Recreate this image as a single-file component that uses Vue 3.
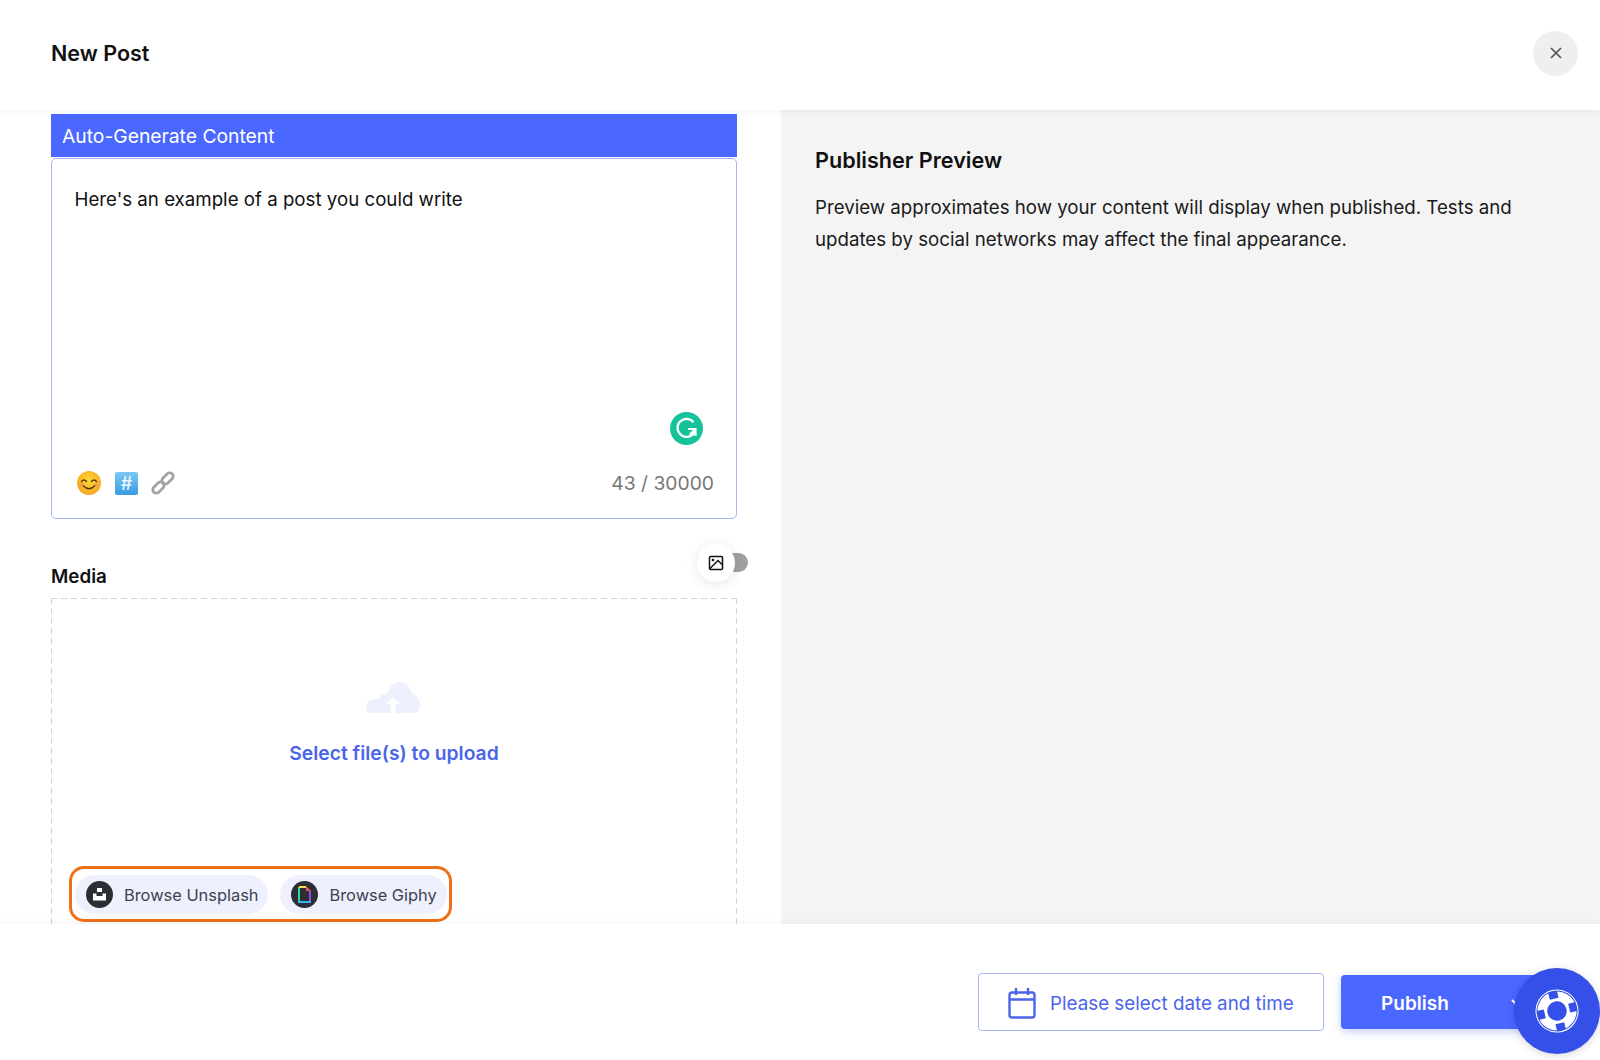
<script setup>
const title = 'New Post'
</script>

<template>
  <div class="page">
    <header class="top">
      <h1>{{ title }}</h1>
      <button class="close" aria-label="Close">
        <svg width="14" height="14" viewBox="0 0 14 14"><path d="M2 2l10 10M12 2L2 12" stroke="#555" stroke-width="1.7" fill="none"/></svg>
      </button>
    </header>

    <main class="main">
      <section class="left">
        <div class="bar">Auto-Generate Content</div>
        <div class="editor">
          <p class="post">Here's an example of a post you could write</p>
          <div class="grammarly">
            <svg width="33" height="33" viewBox="0 0 33 33">
              <circle cx="16.5" cy="16.5" r="16.5" fill="#15c39a"/>
              <path d="M23.500 10.200A9 9 0 1 0 25 19" fill="none" stroke="#fff" stroke-width="2.200"/>
              <path d="M18 17h7.500v7M25 17.500l-5 5" fill="none" stroke="#fff" stroke-width="2.200"/>
            </svg>
          </div>
          <div class="tools">
            <div class="tool-icons">
              <svg width="26" height="24" viewBox="0 0 26 24">
                <defs><radialGradient id="face" cx="50%" cy="40%" r="60%"><stop offset="0" stop-color="#fdd835"/><stop offset="1" stop-color="#f5a623"/></radialGradient></defs>
                <circle cx="13" cy="12" r="12" fill="url(#face)"/>
                <path d="M5.500 10.500q2.500-3 5 0M15.500 10.500q2.500-3 5 0" fill="none" stroke="#5b3a10" stroke-width="1.500" stroke-linecap="round"/>
                <path d="M7 14.500q6 6.500 12 0" fill="none" stroke="#5b3a10" stroke-width="1.500" stroke-linecap="round"/>
                <circle cx="5.500" cy="14" r="2.300" fill="#f78f5c" opacity=".6"/>
                <circle cx="20.500" cy="14" r="2.300" fill="#f78f5c" opacity=".6"/>
              </svg>
              <span class="hash">#</span>
              <svg width="24" height="24" viewBox="0 0 24 24">
                <g fill="none" stroke="#a3a3a3" stroke-width="2.800" transform="rotate(-45 12 12)">
                  <rect x="-1" y="8.500" width="13" height="7" rx="3.500"/>
                  <rect x="12" y="8.500" width="13" height="7" rx="3.500"/>
                </g>
              </svg>
            </div>
            <span class="count">43 / 30000</span>
          </div>
        </div>

        <div class="media-head">
          <h2>Media</h2>
          <div class="toggle">
            <span class="knob"></span>
            <span class="thumb">
              <svg width="16" height="16" viewBox="0 0 16 16">
                <rect x="1.500" y="1.500" width="13" height="13" rx="1" fill="none" stroke="#111" stroke-width="1.500"/>
                <circle cx="5" cy="5" r="1.300" fill="#111"/>
                <path d="M2 13.500l8-8 4 4" fill="none" stroke="#111" stroke-width="1.500"/>
              </svg>
            </span>
          </div>
        </div>

        <div class="drop">
          <svg class="cloud" width="54" height="31" viewBox="0 0 54 31">
            <path fill="#eef0fd" d="M0 26c0-5 4-9 9-9 1 0 2 0 3 .5C14 13 18 11 21 12 23 5 28 0 33 0c7 0 12 5 13 12 5 1 8 6 8 11 0 4-2 8-6 8H6c-4 0-6-2-6-5z"/>
            <path fill="#fff" d="M27 15l-7 7h4.500v9h5v-9H34z"/>
          </svg>
          <div class="select">Select file(s) to upload</div>
          <div class="browse">
            <button class="chip">
              <span class="dot">
                <svg width="15" height="15" viewBox="0 0 15 15"><path fill="#fff" d="M5 1h5v4H5zM1 6.500h3.500V9h6V6.500H14V13.500H1z"/></svg>
              </span>
              Browse Unsplash
            </button>
            <button class="chip chip2">
              <span class="dot">
                <svg width="13" height="17" viewBox="0 0 13 17">
                  <path d="M1 1v15" stroke="#2fd8a0" stroke-width="2" fill="none"/>
                  <path d="M1 1h7" stroke="#f4e14b" stroke-width="2" fill="none"/>
                  <path d="M12 5v11" stroke="#8a4df0" stroke-width="2" fill="none"/>
                  <path d="M0 16h13" stroke="#3ab4f2" stroke-width="2" fill="none"/>
                  <path d="M8 0l5 5H8z" fill="#f5506e"/>
                </svg>
              </span>
              Browse Giphy
            </button>
          </div>
        </div>
      </section>

      <aside class="right">
        <h2>Publisher Preview</h2>
        <p>Preview approximates how your content will display when published. Tests and updates by social networks may affect the final appearance.</p>
      </aside>
    </main>

    <footer class="bottom">
      <button class="date">
        <svg width="28" height="31" viewBox="0 0 28 31" fill="none" stroke="#4a65e8" stroke-width="2.400">
          <rect x="1.500" y="4.500" width="25" height="25" rx="2.500"/>
          <path d="M1.500 11.500h25M8 0v7M20 0v7"/>
        </svg>
        Please select date and time
      </button>
      <button class="publish">
        Publish
        <svg class="chev" width="14" height="9" viewBox="0 0 14 9"><path d="M1 1l6 6 6-6" fill="none" stroke="#fff" stroke-width="2"/></svg>
      </button>
    </footer>

    <button class="help" aria-label="Help">
      <svg width="50" height="50" viewBox="0 0 50 50">
        <g transform="rotate(-13 25 25)">
          <circle cx="25" cy="25" r="14.600" fill="none" stroke="#fff" stroke-width="9.800"/>
          <g fill="#3550e8">
            <rect x="20.500" y="5" width="9" height="7.500"/>
            <rect x="20.500" y="37.500" width="9" height="7.500"/>
            <rect x="5" y="20.500" width="7.500" height="9"/>
            <rect x="37.500" y="20.500" width="7.500" height="9"/>
          </g>
          <circle cx="25" cy="25" r="21" fill="none" stroke="#fff" stroke-width="1"/>
        </g>
      </svg>
    </button>
  </div>
</template>

<style>
html, body { margin: 0; background: #fff; }
</style>

<style scoped>
.page {
  position: relative;
  width: 1600px;
  height: 1060px;
  overflow: hidden;
  display: flex;
  flex-direction: column;
  font-family: Inter, "Liberation Sans", sans-serif;
  color: #111;
  background: #fff;
}
button { font-family: inherit; cursor: pointer; }
h1, h2, p { margin: 0; }

.top {
  height: 110px;
  flex: none;
  display: flex;
  align-items: center;
  justify-content: space-between;
  padding: 0 22px 4px 51px;
  box-sizing: border-box;
  position: relative;
  z-index: 2;
  box-shadow: 0 2px 6px rgba(0, 0, 0, .05);
  background: #fff;
}
.top h1 { font-size: 21.500px; font-weight: 600; line-height: 30px; }
.close {
  width: 45px;
  height: 45px;
  border: 0;
  border-radius: 50%;
  background: #eeeff0;
  display: flex;
  align-items: center;
  justify-content: center;
  padding: 0;
}

.main { flex: 1; min-height: 0; display: flex; overflow: hidden; }
.left {
  width: 781px;
  flex: none;
  box-sizing: border-box;
  padding: 4px 44px 0 51px;
}
.bar {
  height: 43px;
  background: #4a67ff;
  color: #fff;
  font-size: 19.300px;
  font-weight: 400;
  line-height: 45px;
  padding-left: 11px;
}
.editor {
  position: relative;
  height: 361px;
  margin-top: 1px;
  box-sizing: border-box;
  border: 1px solid #a8b4f5;
  border-radius: 5px;
  padding: 30px 22px 0 22.500px;
}
.post { font-size: 18.700px; line-height: 22px; }
.grammarly { position: absolute; right: 33px; top: 253px; height: 33px; }
.tools {
  position: absolute;
  left: 24px;
  right: 22px;
  top: 312px;
  display: flex;
  align-items: center;
  justify-content: space-between;
}
.tool-icons { display: flex; align-items: center; gap: 13px; }
.hash {
  width: 23px;
  height: 23px;
  border-radius: 2px;
  background: linear-gradient(#7cc8f5, #3a9be0);
  color: #eaf6ff;
  font-size: 18px;
  font-weight: 500;
  line-height: 23px;
  text-align: center;
}
.count { font-size: 19.300px; color: #777; line-height: 24px; }

.media-head {
  position: relative;
  height: 79px;
  display: flex;
  align-items: flex-end;
}
.media-head h2 { font-size: 18.800px; font-weight: 600; line-height: 24px; padding-bottom: 9px; }
.toggle { position: absolute; right: -11px; top: 25px; width: 51px; height: 38px; }
.knob {
  position: absolute;
  right: 0;
  top: 9px;
  width: 30px;
  height: 19px;
  border-radius: 10px;
  background: #a1a1a1;
}
.thumb {
  position: absolute;
  left: 0;
  top: 0;
  width: 38px;
  height: 38px;
  border-radius: 50%;
  background: #fff;
  box-shadow: 0 2px 14px rgba(0, 0, 0, .1);
  display: flex;
  align-items: center;
  justify-content: center;
}

.drop {
  height: 400px;
  box-sizing: border-box;
  background:
    repeating-linear-gradient(90deg, #d4d4d4 0 6px, transparent 6px 10px) top / 100% 1px no-repeat,
    repeating-linear-gradient(180deg, #d4d4d4 0 6px, transparent 6px 10px) left / 1px 100% no-repeat,
    repeating-linear-gradient(180deg, #d4d4d4 0 6px, transparent 6px 10px) right / 1px 100% no-repeat;
  padding: 84px 2px 0;
  display: flex;
  flex-direction: column;
  align-items: center;
}
.cloud { display: block; margin-right: 2px; }
.select {
  margin-top: 26px;
  font-size: 19.300px;
  font-weight: 600;
  line-height: 28px;
  color: #4a65e8;
}
.browse {
  align-self: flex-start;
  margin: 99px 0 0 16px;
  border: 3px solid #f07019;
  border-radius: 15px;
  padding: 6px 3px 5px;
  display: flex;
  gap: 12px;
  width: 383px;
  height: 56px;
  box-sizing: border-box;
}
.chip {
  height: 39px;
  border: 0;
  border-radius: 20px;
  background: #eef0fd;
  color: #3d4250;
  font-size: 16.400px;
  display: flex;
  align-items: center;
  gap: 11px;
  padding: 0 10px 0 11px;
  white-space: nowrap;
}
.dot {
  width: 27px;
  height: 27px;
  border-radius: 50%;
  background: #2b2e33;
  display: flex;
  align-items: center;
  justify-content: center;
  flex: none;
}

.right {
  flex: 1;
  background: #f4f4f4;
  padding: 36px 60px 0 34px;
}
.right h2 { font-size: 21.600px; font-weight: 600; line-height: 28px; }
.right p { margin-top: 18px; font-size: 18.720px; line-height: 32px; color: #1a1a1a; }

.bottom {
  height: 136px;
  flex: none;
  display: flex;
  align-items: flex-start;
  padding: 49px 0 0 978px;
  box-sizing: border-box;
  gap: 17px;
  background: #fff;
  position: relative;
  z-index: 2;
  box-shadow: 0 -2px 6px rgba(0, 0, 0, .04);
}
.date {
  width: 346px;
  height: 58px;
  box-sizing: border-box;
  border: 1.500px solid #a8b4f5;
  border-radius: 4px;
  background: #fff;
  color: #4a65e8;
  font-size: 18.800px;
  display: flex;
  align-items: center;
  gap: 14px;
  padding: 2px 0 0 29px;
  white-space: nowrap;
}
.publish {
  width: 220px;
  height: 54px;
  margin-top: 2px;
  flex: none;
  border: 0;
  border-radius: 4px;
  background: #4a67ff;
  color: #fff;
  font-size: 19px;
  font-weight: 600;
  box-shadow: 0 3px 8px rgba(74, 103, 255, .3);
  position: relative;
  text-align: left;
  padding: 2px 0 0 40px;
}
.chev { position: absolute; left: 170px; top: 24px; }
.help {
  position: absolute;
  left: 1514px;
  top: 968px;
  width: 86px;
  height: 86px;
  border: 0;
  border-radius: 50%;
  background: #3550e8;
  z-index: 3;
  display: flex;
  align-items: center;
  justify-content: center;
  padding: 0;
  box-shadow: 0 2px 8px rgba(0, 0, 0, .15);
}
</style>
